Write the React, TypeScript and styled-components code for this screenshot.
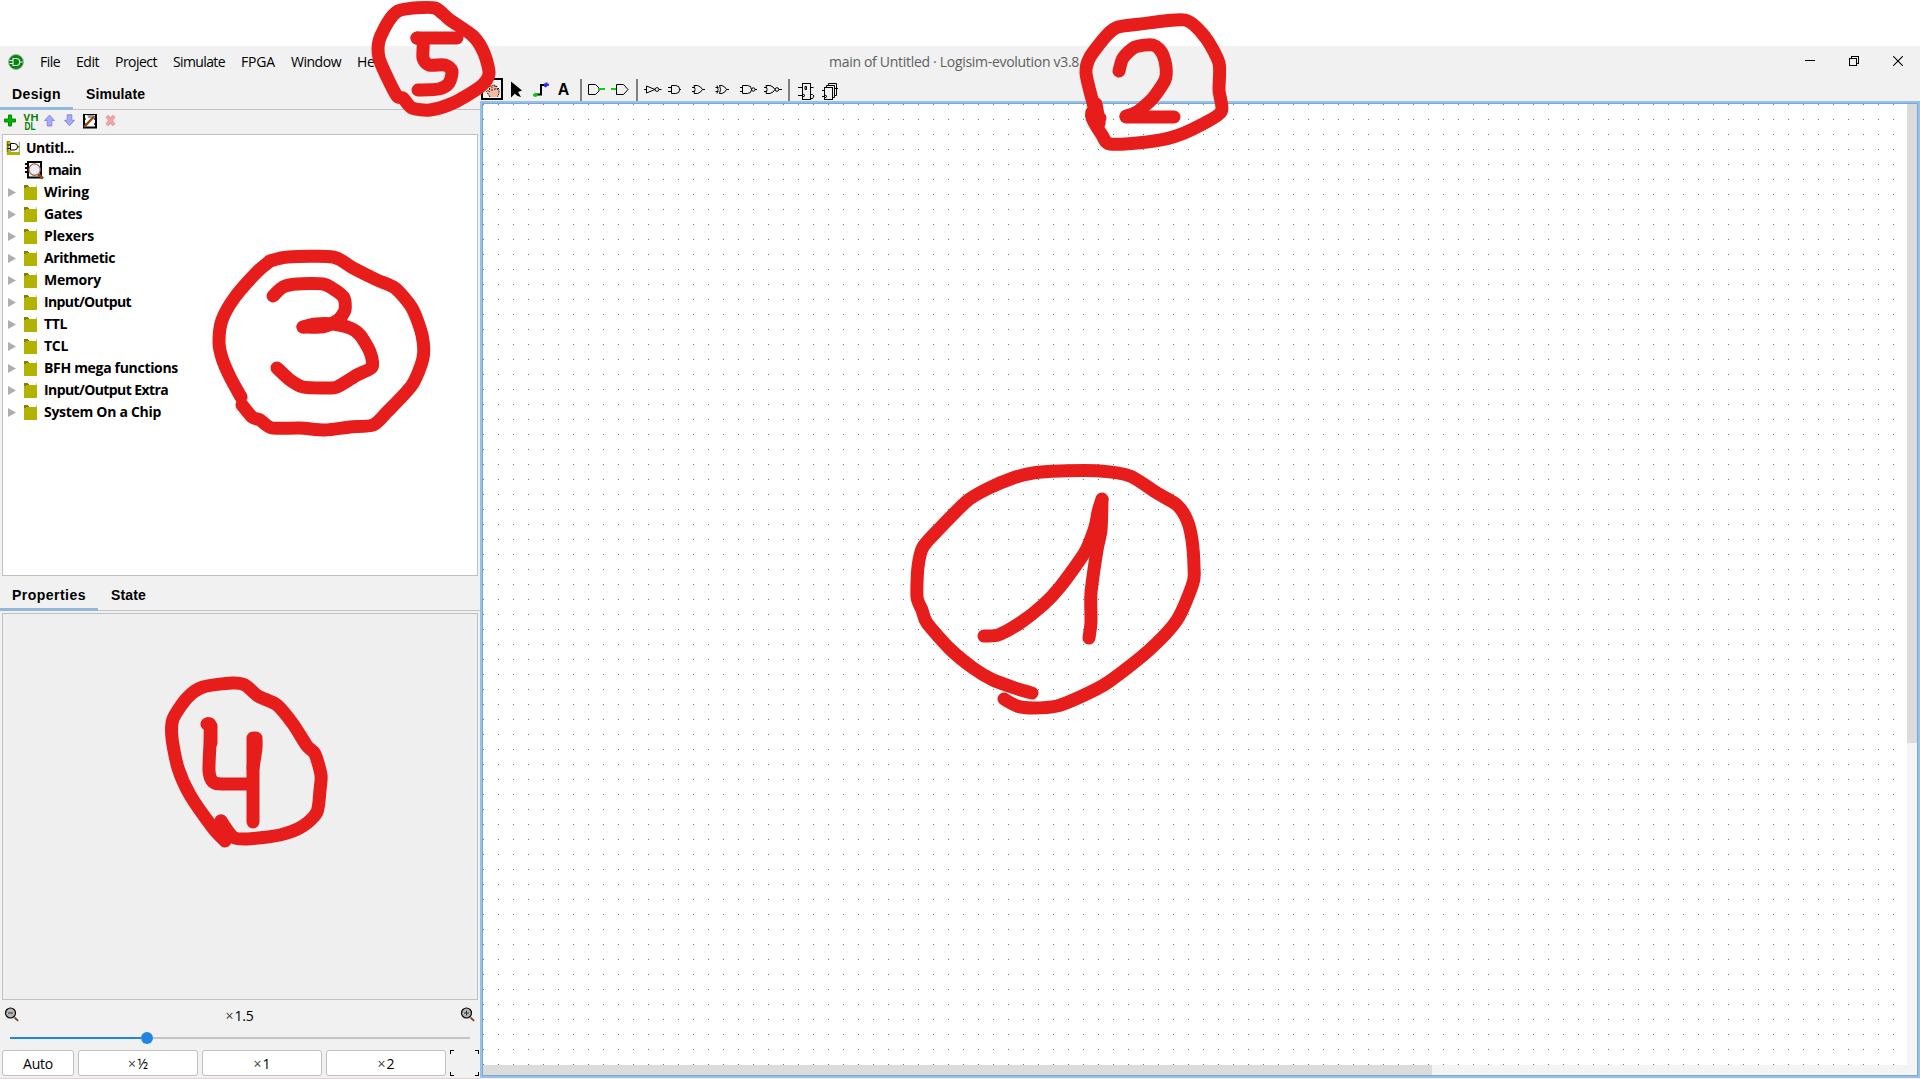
import React, { useLayoutEffect, useRef, useState } from "react";
import styled, { createGlobalStyle } from "styled-components";

const GlobalStyle = createGlobalStyle`
  html, body { margin: 0; padding: 0; background: #fff; overflow: hidden; }
  *, *::before, *::after { box-sizing: border-box; }
  svg { display: block; flex: none; }
`;

const uiFont = `"Open Sans", "Noto Sans", sans-serif`;

/* ---------- text set to a fixed measure ---------- */

const Run = styled.span`
  display: inline-block;
  white-space: pre;
`;

function Fit({ w, children }: { w: number; children: string }) {
  const ref = useRef<HTMLSpanElement>(null);
  const [spacing, setSpacing] = useState(0);
  useLayoutEffect(() => {
    const el = ref.current;
    if (!el) return;
    el.style.letterSpacing = "0px";
    const natural = el.getBoundingClientRect().width;
    const next = (w - natural) / children.length;
    el.style.letterSpacing = `${next}px`;
    setSpacing(next);
  }, [w, children]);
  return (
    <Run ref={ref} style={{ letterSpacing: spacing }}>
      {children}
    </Run>
  );
}

/* ---------- window frame ---------- */

const Screen = styled.div`
  position: relative;
  display: flex;
  flex-direction: column;
  width: 1920px;
  height: 1079px;
  padding-top: 46px;
  background: #fff;
  font-family: ${uiFont};
  font-size: 14px;
  color: #000;
`;

const TitleBar = styled.header`
  display: grid;
  grid-template-columns: 829px 1fr auto;
  height: 31px;
  background: #f1f1f1;
`;

const MenuBar = styled.nav`
  display: flex;
  align-items: center;
  gap: 16px;
  height: 31px;
  padding-left: 8px;
  line-height: 31px;
`;

const WindowTitle = styled.div`
  line-height: 31px;
  color: #606060;
`;

const WindowControls = styled.div`
  display: flex;
  gap: 34px;
  padding: 10px 17px 0 0;
`;

const Body = styled.div`
  display: grid;
  grid-template-columns: 480px 1440px;
  height: 1002px;
  background: #f1f1f1;
`;

/* ---------- sidebar ---------- */

const Sidebar = styled.aside`
  display: flex;
  flex-direction: column;
  border-bottom: 1px solid #ddd3d3;
`;

const TabStrip = styled.div<{ $h: number }>`
  display: flex;
  height: ${(p) => p.$h}px;
  box-shadow: inset 0 -1px 0 #c2c2c2;
  font: bold 14px/20px "Liberation Sans", Arial, sans-serif;
`;

const Tab = styled.div<{ $active?: boolean; $w: number }>`
  display: flex;
  align-items: flex-end;
  width: ${(p) => p.$w}px;
  padding: 0 0 3px ${(p) => (p.$active ? 12 : 13)}px;
  border-bottom: 3px solid ${(p) => (p.$active ? "#92b9dd" : "transparent")};
`;

const TreeToolbar = styled.div`
  display: flex;
  align-items: flex-start;
  height: 24px;
  padding: 4px 0 0 2px;
`;

const Tree = styled.div`
  height: 442px;
  margin: 0 2px;
  padding-top: 2px;
  border: 1px solid #c0c0c0;
  background: #fff;
  font-weight: 700;
`;

const TreeRow = styled.div<{ $indent: number; $gap: number }>`
  display: flex;
  align-items: center;
  gap: ${(p) => p.$gap}px;
  height: 22px;
  padding-left: ${(p) => p.$indent}px;
  line-height: 22px;
`;

const RowIcons = styled.div`
  display: flex;
  align-items: center;
  gap: 8px;
`;

const Properties = styled.div`
  height: 387px;
  margin: 2px 2px 0;
  border: 1px solid #c0c0c0;
  background: #efefef;
`;

const ZoomRow = styled.div`
  display: flex;
  justify-content: space-between;
  height: 32px;
  padding: 7px 5px 0 4px;
  line-height: 17px;
`;

const Slider = styled.div`
  display: flex;
  align-items: center;
  height: 12px;
  margin: 0 10px;
`;

const SliderFill = styled.div`
  width: 131px;
  height: 2px;
  background: #2385e3;
`;

const SliderKnob = styled.div`
  width: 12px;
  height: 12px;
  border-radius: 50%;
  background: #2385e3;
`;

const SliderRest = styled.div`
  flex: 1;
  height: 2px;
  background: #c4c4c4;
`;

const ZoomButtons = styled.div`
  display: flex;
  gap: 4px;
  padding: 6px 0 0 2px;
`;

const ZoomButton = styled.button<{ $w: number }>`
  width: ${(p) => p.$w}px;
  height: 26px;
  padding: 2px 0 0;
  border: 1px solid #c0c0c0;
  border-radius: 3px;
  background: #fff;
  font: 14px/22px ${uiFont};
  color: #000;
`;

const Times = styled.span`
  margin-right: 1px;
  color: #444;
`;

/* ---------- editor ---------- */

const Editor = styled.main`
  display: flex;
  flex-direction: column;
`;

const Tools = styled.div`
  display: flex;
  height: 24px;
  padding-left: 1px;
`;

const Separator = styled.div`
  width: 8px;
  height: 22px;
  margin-top: 2px;
  border: solid #f1f1f1;
  border-width: 0 3px;
  background: #808080;
`;

const CanvasFrame = styled.div`
  height: 977px;
  padding: 2px;
  background: #97c1ea;
`;

const CanvasInner = styled.div`
  display: grid;
  grid-template-columns: 1424px 10px;
  grid-template-rows: 961px 10px;
  width: 1436px;
  height: 973px;
  border: 1px solid #7ba8d2;
  background: #f4f4f4;
`;

const Grid = styled.div`
  overflow: hidden;
  background: #fff;
`;

const VThumb = styled.div`
  height: 639px;
  background: #dbdbdb;
`;

const HThumb = styled.div`
  width: 949px;
  height: 10px;
  background: #dbdbdb;
`;

const Annotations = styled.svg`
  position: absolute;
  inset: 0;
  pointer-events: none;
`;

/* ---------- icons ---------- */

const Px = ({ w = 24, h = 24, children, crisp }: { w?: number; h?: number; children: React.ReactNode; crisp?: boolean }) => (
  <svg width={w} height={h} viewBox={`0 0 ${w} ${h}`} fill="none" stroke="#000" shapeRendering={crisp ? "crispEdges" : "auto"}>
    {children}
  </svg>
);

const AppLogo = () => (
  <Px w={16} h={16}>
    <circle cx="8" cy="8" r="7.5" fill="#0a8212" stroke="#a3b5a0" />
    <path d="M5 4.500h3.200a3.500 3.500 0 0 1 0 7H5zM1.500 6.500H5M1.500 9.500H5M11.700 8h3" stroke="#d9f2d9" strokeWidth="1.200" />
  </Px>
);

const PlusIcon = () => (
  <Px w={20} h={20}>
    <path d="M6.500 1h3v4h4v3h-4v4h-3V8h-4V5h4z" fill="#00b400" stroke="#008a00" />
  </Px>
);

const VhdlIcon = () => (
  <Px w={20} h={20}>
    <g fill="#008000" stroke="none" fontFamily="Liberation Sans, Arial, sans-serif" fontWeight="700" fontSize="10">
      <text x="1" y="7.200" textLength="15.500" lengthAdjust="spacingAndGlyphs">VH</text>
      <text x="2.500" y="15.500" textLength="11" lengthAdjust="spacingAndGlyphs">DL</text>
    </g>
  </Px>
);

const MoveIcon = ({ down }: { down?: boolean }) => (
  <Px w={20} h={20}>
    <path
      d="M7.500 1 12.500 6.500H9.800V12H5.200V6.500H2.500z"
      fill="#a9a9fa"
      stroke="#8484dc"
      strokeWidth=".9"
      transform={down ? "rotate(180 7.500 6.400)" : undefined}
    />
  </Px>
);

const EditCircuitIcon = () => (
  <Px w={21} h={20}>
    <rect x="2" y="0" width="12" height="13.500" fill="#fff" strokeWidth="2" />
    <path d="M5 1h6l-1.500 3h-3z" fill="#999" stroke="none" />
    <path d="M3.500 4v2M3.500 9v2" stroke="#00b400" />
    <path d="M12.500 4v2M12.500 9v2" stroke="#3333ff" />
    <path d="M2 13 12.500 2" stroke="#8a4513" strokeWidth="2.400" />
  </Px>
);

const DeleteIcon = () => (
  <Px w={20} h={20}>
    <path d="m4 2 7 9M11 2l-7 9" stroke="#e08080" strokeWidth="3.600" />
    <path d="m4 2.300 7 8.400M11 2.300l-7 8.400" stroke="#faa5a5" strokeWidth="2.200" />
  </Px>
);

const ProjectIcon = () => (
  <Px w={15} h={16}>
    <path d="M.8 1h3l1 1.500V12H14v3H.8z" fill="#b2b200" stroke="none" />
    <path d="M.8 1h3v1H2v10H.8z" fill="#808000" stroke="none" />
    <path d="M3.500 3.500h8v7h-8z" fill="#fff" stroke="none" />
    <path d="M4.500 3.500h3.800a3.200 3.200 0 0 1 0 6.500H4.500zM1.500 5h3M1.500 8.500h3M11.500 6.800h2" />
    <path d="M13.300 2v10" stroke="#a0a040" />
  </Px>
);

const MainCircuitIcon = () => (
  <Px w={19} h={20}>
    <rect x="3" y="2" width="13" height="15.500" fill="#fff" strokeWidth="2" />
    <path d="M0 4h3M0 8h3M0 12h3" strokeWidth="2" />
    <path d="m13 14 5 4.500" stroke="#8a4513" strokeWidth="2.800" />
    <circle cx="9.600" cy="9.600" r="5.700" fill="#ececfa" stroke="#a0603c" strokeWidth="1.200" />
  </Px>
);

const FolderIcon = () => (
  <Px w={13} h={15} crisp>
    <path d="M0 0h4v1h1v1H2v1H0z" fill="#808000" stroke="none" />
    <path d="M0 3h2V2h11v13H0z" fill="#b2b200" stroke="none" />
    <path d="M12 0h1v2h-1z" fill="#c8c8c8" stroke="none" />
  </Px>
);

const Expander = () => (
  <Px w={8} h={9}>
    <path d="M0 0v9l8-4.500z" fill="#aeaeae" stroke="none" />
  </Px>
);

const Magnifier = ({ plus }: { plus?: boolean }) => (
  <Px w={15} h={15}>
    <path d="m10.500 10.500 3.600 3.400" stroke="#8a4513" strokeWidth="1.900" />
    <circle cx="6.500" cy="6" r="5" fill="#b5b5b5" strokeWidth="1.200" />
    <path d={plus ? "M4 6h5M6.500 3.500v5" : "M4 6h5"} stroke="#333" />
  </Px>
);

const FitIcon = () => (
  <Px w={29} h={26} crisp>
    <path d="M.5 4V.5H4M25 .5h3.500V4M28.500 22v3.500H25M4 25.500H.5V22" />
  </Px>
);

const HandTool = () => (
  <Px>
    <rect x="1" y="2" width="20" height="20" strokeWidth="2" />
    <path d="M9 20 5.500 14.500 6.500 13.200 8.500 14.500V10l1.500-1.500L11.500 10V8l1.500-.5L14 9v1l1.500-.8L16.500 12 18 11.500V16l-1.500 4z" fill="#f5b9a0" stroke="none" />
    <path d="M9 20 5.500 14.500 6.500 13.200 8.500 14.500V10l1-1.500 1.500 1V14M11.500 9l1.500-1.500L14 9v4.500M14.500 9l1.500.5.500 4M17 11l1 1v4l-1.500 4" strokeWidth=".9" strokeDasharray="2 1" />
  </Px>
);

const ArrowTool = () => (
  <Px>
    <path d="M6 4.500V20.500L9.800 16.800 12.500 19 16 20 13 15l4-1.500z" fill="#000" stroke="none" />
  </Px>
);

const WireTool = () => (
  <Px>
    <path d="M6 17.500h6V8h5" strokeWidth="2" />
    <path d="M4 17h1.500v-1.500L9 17l-1 2.500-2.500.5L4 18.500z" fill="#00d000" stroke="none" />
    <path d="M15 6.500h1.500V5.500h2v1.200H20v2h-1.500L17 10.500l-2-1z" fill="#2828ff" stroke="none" />
  </Px>
);

const TextTool = () => (
  <Px>
    <text x="4.700" y="18" fill="#000" stroke="none" fontFamily="Liberation Sans, Arial, sans-serif" fontWeight="700" fontSize="16.500" textLength="11.500" lengthAdjust="spacingAndGlyphs">
      A
    </text>
  </Px>
);

const InputPin = () => (
  <Px>
    <path d="M3.500 7.500H10.500L14 11v3L10.500 17.500H3.500z" />
    <path d="M14 12h6" stroke="#00d800" strokeWidth="2" />
  </Px>
);

const OutputPin = () => (
  <Px>
    <path d="M7.500 7.500H14.500L19 12.500 14.500 17.500H7.500z" />
    <path d="M2 12h5" stroke="#00d800" strokeWidth="2" />
  </Px>
);

const gatePaths: Record<string, React.ReactNode> = {
  not: <><path d="M3 12.500h2.500M5.500 9v7l8.500-3.500zM18 12.500h2.500" /><circle cx="16" cy="12.500" r="1.900" /></>,
  and: <path d="M3 10.500h3M3 14.500h3M6.500 8.500h4.200a4 4 0 0 1 0 8H6.500zM14.500 12.500h1.500" />,
  or: <path d="M3 10.500h3M3 14.500h3M5 8.500h3.500q3.500 1 5 4-1.500 3-5 4H5q2.200-4 0-8M13.500 12.500H16" />,
  xor: <path d="M2.500 10.500h3M2.500 14.500h3M4 8.500q2.200 4 0 8M6.500 8.500h2.500q3.200 1 4.500 4-1.300 3-4.500 4H6.500q2.200-4 0-8M13.500 12.500H16" />,
  nand: <><path d="M3 10.500h2M3 14.500h2M5.500 8.500h5a4 4 0 0 1 0 8h-5zM18 12.500h2" /><circle cx="16.300" cy="12.500" r="1.700" /></>,
  nor: <><path d="M3 10.500h3M3 14.500h3M5 8.500h4q3.500 1 5 4-1.500 3-5 4H5q2.200-4 0-8M18 12.500h3" /><circle cx="16" cy="12.500" r="1.800" /></>,
};

const Gate = ({ kind }: { kind: string }) => <Px>{gatePaths[kind]}</Px>;

const FlipFlop = () => (
  <Px>
    <rect x="9.500" y="6.500" width="8" height="16" />
    <path d="M5 10.500h4M5 18.500h4M18 10.500h2.500M18 17.500h1.500l1.500 1.500-1.500 2.500H18M12 9.500h1.500v3H12zM10 17l2 1.500-2 1.500" />
  </Px>
);

const Register = () => (
  <Px>
    <path d="M11.500 8V6.500h8V18.500H18M9.500 10V8.500h8V20.500H16" />
    <rect x="7.500" y="10.500" width="8" height="12" fill="#f1f1f1" />
    <path d="M5 13.500h2.500M5 19.500h2.500M18 11.500h3M8 18l2 1.500L8 21" />
  </Px>
);

const MinimizeIcon = () => (
  <Px w={10} h={10} crisp><path d="M0 4.500h10" /></Px>
);
const RestoreIcon = () => (
  <Px w={10} h={10} crisp><path d="M.5 2.500h7v7h-7zM2.500 2.500v-2h7v7h-2" /></Px>
);
const CloseIcon = () => (
  <Px w={10} h={10}><path d="m.3.3 9.400 9.400M9.700.3.3 9.700" strokeWidth="1.100" /></Px>
);

/* ---------- dot grid ---------- */

const Dots = () => (
  <svg width="1424" height="961" shapeRendering="crispEdges">
    <defs>
      <pattern id="dots" width="15" height="15" patternUnits="userSpaceOnUse">
        <rect width="1" height="1" fill="#757575" />
      </pattern>
    </defs>
    <rect width="1424" height="961" fill="url(#dots)" />
  </svg>
);

/* ---------- hand-drawn marks ---------- */

const strokes = [
  "1032,693 1018,689 993,680 973,668 950,649 927,623 922,610 917,597 918,567 923,547 940,528 967,501 987,489 1013,478 1033,473 1060,471 1100,471 1130,476 1157,493 1177,505 1187,520 1192,540 1194,567 1193,583 1177,620 1147,652 1107,683 1080,697 1057,706 1033,708 1017,706 1004,699",
  "984,636 998,635 1020,623 1043,605 1060,587 1085,552 1095,527 1098,512 1102,499",
  "1102,500 1101,530 1097,550 1091,593 1091,622 1089,638",
  "1099,123 1093,103 1086,73 1090,57 1107,35 1118,27 1140,24 1185,20 1205,37 1219,63 1219,90 1221,112 1197,127 1173,137 1147,142 1110,144 1102,135 1092,118 1092,112",
  "1096,104 1099,123 1092,113 1100,118",
  "1119,71 1123,58 1135,47 1153,45 1162,53 1166,67 1165,80 1153,98 1137,112 1126,116",
  "1126,117 1174,117",
  "270,261 288,257 333,257 353,268 377,280 395,288 412,308 422,335 423,358 412,385 387,412 373,425 350,427 325,430 300,428 272,428 260,420 252,417 242,405",
  "241,397 230,377 222,358 219,342 222,320 235,297 257,272 270,261",
  "273,296 283,287 297,284 323,284 335,290 344,298 345,310 338,320 323,327 303,327",
  "303,327 316,324 333,324 350,328 360,335 370,352 372,367 357,375 337,387 323,388 303,387 290,380 277,368",
  "225,841 213,828 190,795 178,768 172,738 173,719 187,698 203,687 232,683 245,685 258,696 277,705 293,724 307,746 315,754 321,775 320,790 317,812 303,826 280,835 247,839 233,837 221,821",
  "221,821 227,836",
  "207,724 210,725 210,743 209,771 213,782 222,784 250,784",
  "211,726 211,743",
  "253,738 253,822",
  "256,738 256,748 253,768",
  "413,8 435,8 450,20 473,36 484,53 489,74 480,87 453,103 430,110 412,108 403,98 397,96 387,77 379,58 379,41 388,22 398,11 413,8",
  "417,38 457,38",
  "417,38 423,42 423,58 429,65 445,65 452,71 449,83 439,89 418,90",
];

/* Turns a point list into a Catmull-Rom style curve through every point. */
function smooth(points: string) {
  const p = points.split(" ").map((s) => s.split(",").map(Number));
  const k = 8;
  let d = `M${p[0][0]} ${p[0][1]}`;
  for (let i = 0; i < p.length - 1; i++) {
    const a = p[Math.max(0, i - 1)];
    const b = p[i];
    const c = p[i + 1];
    const e = p[Math.min(p.length - 1, i + 2)];
    d += `C${b[0] + (c[0] - a[0]) / k} ${b[1] + (c[1] - a[1]) / k} ${c[0] - (e[0] - b[0]) / k} ${c[1] - (e[1] - b[1]) / k} ${c[0]} ${c[1]}`;
  }
  return d;
}

/* ---------- data ---------- */

const menus: [string, number][] = [
  ["File", 20], ["Edit", 23], ["Project", 42], ["Simulate", 52], ["FPGA", 34], ["Window", 50], ["Help", 29],
];

const libraries: [string, number][] = [
  ["Wiring", 45], ["Gates", 38], ["Plexers", 50], ["Arithmetic", 71], ["Memory", 57], ["Input/Output", 87],
  ["TTL", 23], ["TCL", 24], ["BFH mega functions", 134], ["Input/Output Extra", 124], ["System On a Chip", 117],
];

export default function App() {
  return (
    <Screen>
      <GlobalStyle />
      <TitleBar>
        <MenuBar>
          <AppLogo />
          {menus.map(([label, w]) => (
            <Fit key={label} w={w}>{label}</Fit>
          ))}
        </MenuBar>
        <WindowTitle>
          <Fit w={250}>main of Untitled · Logisim-evolution v3.8</Fit>
        </WindowTitle>
        <WindowControls>
          <MinimizeIcon />
          <RestoreIcon />
          <CloseIcon />
        </WindowControls>
      </TitleBar>
      <Body>
        <Sidebar>
          <TabStrip $h={33}>
            <Tab $active $w={73}><Fit w={49}>Design</Fit></Tab>
            <Tab $w={84}><Fit w={59}>Simulate</Fit></Tab>
          </TabStrip>
          <TreeToolbar>
            <PlusIcon />
            <VhdlIcon />
            <MoveIcon />
            <MoveIcon down />
            <EditCircuitIcon />
            <DeleteIcon />
          </TreeToolbar>
          <Tree>
            <TreeRow $indent={3} $gap={5}>
              <ProjectIcon />
              <Fit w={48}>Untitl...</Fit>
            </TreeRow>
            <TreeRow $indent={22} $gap={4}>
              <MainCircuitIcon />
              <Fit w={33}>main</Fit>
            </TreeRow>
            {libraries.map(([label, w]) => (
              <TreeRow key={label} $indent={5} $gap={7}>
                <RowIcons>
                  <Expander />
                  <FolderIcon />
                </RowIcons>
                <Fit w={w}>{label}</Fit>
              </TreeRow>
            ))}
          </Tree>
          <TabStrip $h={35}>
            <Tab $active $w={98}><Fit w={74}>Properties</Fit></Tab>
            <Tab $w={84}><Fit w={35}>State</Fit></Tab>
          </TabStrip>
          <Properties />
          <ZoomRow>
            <Magnifier />
            <span><Times>×</Times><Fit w={19}>1.5</Fit></span>
            <Magnifier plus />
          </ZoomRow>
          <Slider>
            <SliderFill />
            <SliderKnob />
            <SliderRest />
          </Slider>
          <ZoomButtons>
            <ZoomButton $w={72}><Fit w={30}>Auto</Fit></ZoomButton>
            <ZoomButton $w={120}><Times>×</Times>½</ZoomButton>
            <ZoomButton $w={120}><Times>×</Times>1</ZoomButton>
            <ZoomButton $w={120}><Times>×</Times>2</ZoomButton>
            <FitIcon />
          </ZoomButtons>
        </Sidebar>
        <Editor>
          <Tools>
            <HandTool />
            <ArrowTool />
            <WireTool />
            <TextTool />
            <Separator />
            <InputPin />
            <OutputPin />
            <Separator />
            <Gate kind="not" />
            <Gate kind="and" />
            <Gate kind="or" />
            <Gate kind="xor" />
            <Gate kind="nand" />
            <Gate kind="nor" />
            <Separator />
            <FlipFlop />
            <Register />
          </Tools>
          <CanvasFrame>
            <CanvasInner>
              <Grid><Dots /></Grid>
              <VThumb />
              <HThumb />
            </CanvasInner>
          </CanvasFrame>
        </Editor>
      </Body>
      <Annotations width="1920" height="1079" fill="none" stroke="#e71d1c" strokeWidth="13" strokeLinecap="round" strokeLinejoin="round">
        {strokes.map((s) => (
          <path key={s} d={smooth(s)} />
        ))}
      </Annotations>
    </Screen>
  );
}
